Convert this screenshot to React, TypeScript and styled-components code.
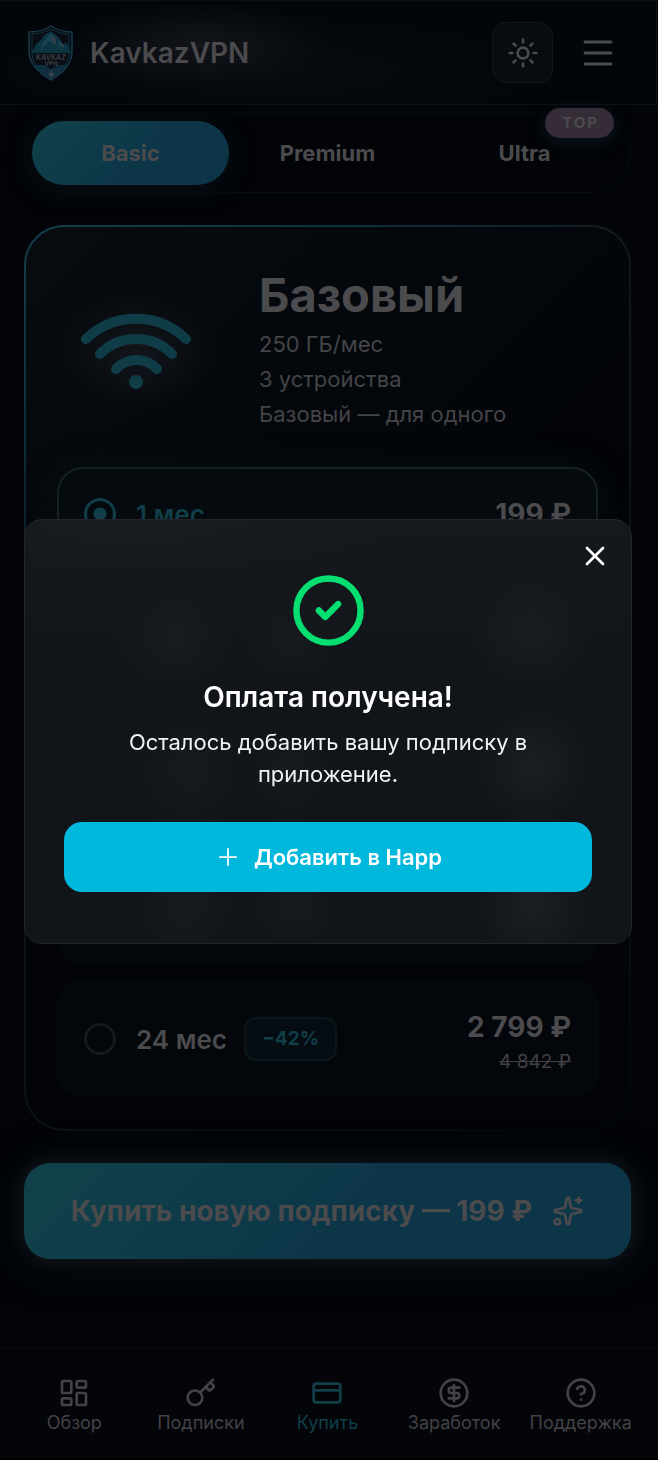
import { useState } from 'react';
import styled, { createGlobalStyle, css } from 'styled-components';
import {
  CircleCheck,
  CircleDollarSign,
  CircleHelp,
  CreditCard,
  Key,
  LayoutDashboard,
  Plus,
  Sparkles,
  Sun,
  X,
} from 'lucide-react';

const GlobalStyle = createGlobalStyle`
  * {
    box-sizing: border-box;
  }

  body {
    margin: 0;
    background: #020408;
    color: #4b4b4d;
    font-family: Inter, 'Liberation Sans', sans-serif;
    font-size: 22px;
  }

  button {
    border: 0;
    padding: 0;
    background: none;
    color: inherit;
    font: inherit;
    cursor: pointer;
  }

  h1, h2, p {
    margin: 0;
  }
`;

const Page = styled.div`
  margin-right: 1px;
  padding-bottom: 200px;
`;

const Header = styled.header`
  display: flex;
  align-items: center;
  height: 105px;
  padding: 0 40px 0 24px;
  border-top: 1px solid #060f14;
  border-right: 1px solid #0a1518;
  border-bottom: 1px solid #0c1317;
  background: radial-gradient(ellipse 130px 44px at 200px 44px, #12141a, transparent),
    radial-gradient(ellipse 300px 60px at 270px 70px, #070b0f, transparent), #02060a;
`;

const Brand = styled.a`
  display: flex;
  align-items: center;
  gap: 13px;
  margin-right: auto;
  color: inherit;
  font-size: 28px;
  font-weight: 600;
  text-decoration: none;
`;

const ThemeButton = styled.button`
  display: grid;
  place-items: center;
  width: 61px;
  height: 61px;
  border: 1px solid #0e171b;
  border-radius: 14px;
  background: #070c10;
`;

const MenuButton = styled.button`
  display: grid;
  place-items: center;
  width: 36px;
  height: 36px;
  margin-left: 27px;
`;

const Main = styled.main`
  padding: 8px 26px 0 24px;
`;

const Tabs = styled.div`
  position: relative;
  display: grid;
  grid-template-columns: repeat(3, 1fr);
  height: 80px;
  padding: 7px;
  border: 1px solid #070c10;
  border-radius: 40px;
`;

const Tab = styled.button<{ $active?: boolean }>`
  border-radius: 32px;
  font-weight: 700;
  ${({ $active }) =>
    $active &&
    css`
      background: linear-gradient(135deg, #10404a 10%, #0c3548 60%);
      box-shadow: 0 4px 26px #071016;
    `}
`;

const TopBadge = styled.span`
  position: absolute;
  top: -6px;
  right: 16px;
  padding: 0 15px 0 17px;
  border-radius: 15px;
  background: #362c37;
  box-shadow: 0 4px 16px #08181f;
  font-size: 15px;
  font-weight: 700;
  line-height: 30px;
  letter-spacing: 2px;
`;

const Card = styled.section`
  margin-top: 32px;
  padding: 40px 31px 32px;
  border: 2px solid transparent;
  border-radius: 40px;
  background: linear-gradient(135deg, #060c10, #020408 50%) padding-box,
    linear-gradient(150deg, #113f4a, #0d303b 16%, #11161a 30%, #0e1215 70%, #04070a) border-box;
`;

const CardHead = styled.div`
  display: grid;
  grid-template-columns: 158px 1fr;
  gap: 44px;
  align-items: center;
`;

const WifiBox = styled.div`
  display: grid;
  place-items: center;
  height: 164px;
  padding-top: 4px;
  background: radial-gradient(ellipse 80px 60px, #12141a, #0c1015 50%, transparent);
`;

const TariffName = styled.h1`
  margin-bottom: 4px;
  font-size: 47px;
  font-weight: 700;
  line-height: 56px;
`;

const TariffLine = styled.p`
  color: #454448;
  line-height: 35px;
`;

const Plans = styled.div`
  display: grid;
  gap: 18px;
  margin-top: 35px;
`;

const planBox = css`
  border: 2px solid #06090d;
  border-radius: 26px;
  background: #03060a;
`;

const PlanRow = styled.label<{ $selected?: boolean }>`
  ${planBox}
  display: flex;
  align-items: center;
  height: 116px;
  padding: 0 25px;
  font-size: 26px;
  font-weight: 600;
  ${({ $selected }) =>
    $selected &&
    css`
      height: 94px;
      border-color: #142127;
      background: #050a0e;
      box-shadow: 0 0 30px #080e12;
    `}
`;

const PlanSlot = styled.div`
  ${planBox}
  height: 116px;
`;

const Radio = styled.input`
  appearance: none;
  width: 32px;
  height: 32px;
  margin: 0 20px 0 0;
  border: 3px solid #14191c;
  border-radius: 50%;

  &:checked {
    border-color: #113e49;
    background: radial-gradient(circle, #113e49 6px, transparent 7px);
  }
`;

const Months = styled.span<{ $selected?: boolean }>`
  color: ${({ $selected }) => ($selected ? '#113e49' : 'inherit')};
`;

const Discount = styled.span`
  margin-left: 17px;
  padding: 0 16px;
  border: 2px solid #0b161b;
  border-radius: 12px;
  background: #050d12;
  color: #113e49;
  font-size: 19px;
  font-weight: 700;
  line-height: 40px;
`;

const Prices = styled.span`
  display: grid;
  justify-items: end;
  margin-left: auto;
`;

const Price = styled.span`
  font-size: 28px;
  font-weight: 700;
  line-height: 46px;
`;

const OldPrice = styled.s`
  color: #414044;
  font-size: 19px;
  font-weight: 400;
  line-height: 24px;
`;

const BuyButton = styled.button`
  display: flex;
  align-items: center;
  justify-content: center;
  gap: 20px;
  width: 100%;
  height: 96px;
  margin-top: 32px;
  border-radius: 26px;
  background: linear-gradient(135deg, #10404a 10%, #0c3548 60%);
  box-shadow: 0 0 20px #12181d, 0 4px 44px #0a1116;
  font-size: 28px;
  font-weight: 700;
`;

const BottomNav = styled.nav`
  position: fixed;
  inset: auto 0 0 0;
  display: grid;
  grid-template-columns: repeat(5, 1fr);
  height: 113px;
  padding: 29px 14px 0 11px;
  border-top: 1px solid #080b0f;
  border-bottom: 2px solid #000;
  background: #030509;
`;

const NavLink = styled.a<{ $active?: boolean }>`
  display: flex;
  flex-direction: column;
  align-items: center;
  gap: 2px;
  color: ${({ $active }) => ($active ? '#113e49' : '#434246')};
  font-size: 18px;
  line-height: 24px;
  text-decoration: none;
`;

const Overlay = styled.div`
  position: fixed;
  inset: 0;
  display: grid;
  align-items: center;
  padding: 3px 26px 0 24px;
`;

const Dialog = styled.div`
  position: relative;
  display: flex;
  flex-direction: column;
  align-items: center;
  padding: 52px 39px 51px;
  border: 1px solid #252529;
  border-radius: 18px;
  background: radial-gradient(circle 60px at 150px 116px, #171c20, transparent),
    radial-gradient(circle 50px at 265px 116px, #161b1f, transparent),
    radial-gradient(circle 60px at 506px 112px, #191d21, transparent),
    radial-gradient(circle 60px at 165px 250px, #161b1f, transparent),
    radial-gradient(circle 50px at 265px 250px, #161b1f, transparent),
    radial-gradient(circle 60px at 508px 245px, #1b1e22, transparent),
    radial-gradient(circle 60px at 160px 386px, #161b1f, transparent),
    radial-gradient(circle 50px at 270px 386px, #161b1f, transparent),
    radial-gradient(circle 60px at 508px 386px, #1b1e22, transparent),
    radial-gradient(ellipse 260px 60px at 110px 0, #181d21, transparent),
    linear-gradient(#15181c, #111418 40%);
  color: #fff;
  text-align: center;
`;

const CloseButton = styled.button`
  position: absolute;
  top: 20px;
  right: 20px;
  display: grid;
  place-items: center;
`;

const DialogTitle = styled.h2`
  margin-top: 30px;
  font-size: 28px;
  font-weight: 600;
  line-height: 36px;
`;

const DialogText = styled.p`
  max-width: 430px;
  margin-top: 11px;
  color: #f0f3f4;
  line-height: 32px;
`;

const AddButton = styled.button`
  display: flex;
  align-items: center;
  justify-content: center;
  gap: 12px;
  width: 100%;
  height: 70px;
  margin-top: 32px;
  border-radius: 18px;
  background: #00b8db;
  font-weight: 600;
`;

const Logo = () => (
  <svg width="53" height="58" viewBox="0 0 53 58" aria-hidden="true">
    <path d="M27 2c6 4 13 6 21 6v19c0 13-9 22-21 29C15 49 5 40 5 27V8c9 0 16-2 22-6z" fill="#070d13" stroke="#173a49" strokeWidth="1.5" />
    <path d="M27 5c6 3 11 5 18 5v18c0 11-7 19-18 25C16 47 8 39 8 28V10c7 0 13-2 19-5z" fill="none" stroke="#12313f" />
    <path d="M7 29l6-10 4-3 3-5 7-4 7 6 4 7 5-1 4 10z" fill="#0d3341" />
    <path d="M27 9l5 6-2 7-4-5-5 4-5 7 3-10zM35 15l6 9-5-2-3 4z" fill="#174451" />
    <path d="M27 9l5 7v5l-4-5zM37 17l4 7-4-2z" fill="#343e45" />
    <path d="M10 41h10l7 4 8-4h8c-3 6-9 11-16 14-7-3-13-8-17-14z" fill="#0d2f3d" />
    <path d="M27 45l1.5 4 2.5 1-4 4-3-4 2-1z" fill="#3a444b" />
    <text x="27" y="36" textAnchor="middle" fontSize="7" fontWeight="700" fill="#3a3b40">KAVKAZ</text>
    <text x="27" y="42" textAnchor="middle" fontSize="6" fontWeight="700" fill="#3a3b40">VPN</text>
  </svg>
);

const WifiIcon = () => (
  <svg width="112" height="80" viewBox="0 0 112 80" fill="none" stroke="#103c47" strokeWidth="10" strokeLinecap="round" aria-hidden="true">
    <path d="M6 27a72 72 0 0 1 100 0" />
    <path d="M20 42a51 51 0 0 1 72 0" />
    <path d="M36 57a28 28 0 0 1 41 0" />
    <circle cx="56" cy="70" r="7" fill="#103c47" stroke="none" />
  </svg>
);

const tabs = ['Basic', 'Premium', 'Ultra'];

const navItems = [
  { label: 'Обзор', icon: LayoutDashboard },
  { label: 'Подписки', icon: Key },
  { label: 'Купить', icon: CreditCard, active: true },
  { label: 'Заработок', icon: CircleDollarSign },
  { label: 'Поддержка', icon: CircleHelp },
];

export function App() {
  const [tab, setTab] = useState('Basic');
  const [plan, setPlan] = useState('1');
  const [open, setOpen] = useState(true);

  return (
    <>
      <GlobalStyle />
      <Page>
        <Header>
          <Brand href="#">
            <Logo />
            KavkazVPN
          </Brand>
          <ThemeButton aria-label="Theme">
            <Sun size={32} />
          </ThemeButton>
          <MenuButton aria-label="Menu">
            <svg width="32" height="32" viewBox="0 0 32 32" stroke="currentColor" strokeWidth="3" strokeLinecap="round">
              <path d="M3 5h26M3 16h26M3 27h26" />
            </svg>
          </MenuButton>
        </Header>

        <Main>
          <Tabs>
            {tabs.map((name) => (
              <Tab key={name} $active={tab === name} onClick={() => setTab(name)}>
                {name}
              </Tab>
            ))}
            <TopBadge>TOP</TopBadge>
          </Tabs>

          <Card>
            <CardHead>
              <WifiBox>
                <WifiIcon />
              </WifiBox>
              <div>
                <TariffName>Базовый</TariffName>
                <TariffLine>250 ГБ/мес</TariffLine>
                <TariffLine>3 устройства</TariffLine>
                <TariffLine>Базовый — для одного</TariffLine>
              </div>
            </CardHead>

            <Plans>
              <PlanRow $selected={plan === '1'}>
                <Radio type="radio" name="plan" checked={plan === '1'} onChange={() => setPlan('1')} />
                <Months $selected={plan === '1'}>1 мес</Months>
                <Prices>
                  <Price>199 ₽</Price>
                </Prices>
              </PlanRow>
              <PlanSlot />
              <PlanSlot />
              <PlanSlot />
              <PlanRow>
                <Radio type="radio" name="plan" checked={plan === '24'} onChange={() => setPlan('24')} />
                <Months>24 мес</Months>
                <Discount>−42%</Discount>
                <Prices>
                  <Price>2 799 ₽</Price>
                  <OldPrice>4 842 ₽</OldPrice>
                </Prices>
              </PlanRow>
            </Plans>
          </Card>

          <BuyButton>
            Купить новую подписку — 199 ₽
            <Sparkles size={32} />
          </BuyButton>
        </Main>
      </Page>

      <BottomNav>
        {navItems.map(({ label, icon: Icon, active }) => (
          <NavLink key={label} href="#" $active={active}>
            <Icon size={32} />
            {label}
          </NavLink>
        ))}
      </BottomNav>

      {open && (
        <Overlay>
          <Dialog role="dialog" aria-labelledby="paid-title">
            <CloseButton aria-label="Close" onClick={() => setOpen(false)}>
              <X size={32} />
            </CloseButton>
            <CircleCheck size={77} color="#05df72" />
            <DialogTitle id="paid-title">Оплата получена!</DialogTitle>
            <DialogText>Осталось добавить вашу подписку в приложение.</DialogText>
            <AddButton>
              <Plus size={28} strokeWidth={1.5} />
              Добавить в Happ
            </AddButton>
          </Dialog>
        </Overlay>
      )}
    </>
  );
}

export default App;
